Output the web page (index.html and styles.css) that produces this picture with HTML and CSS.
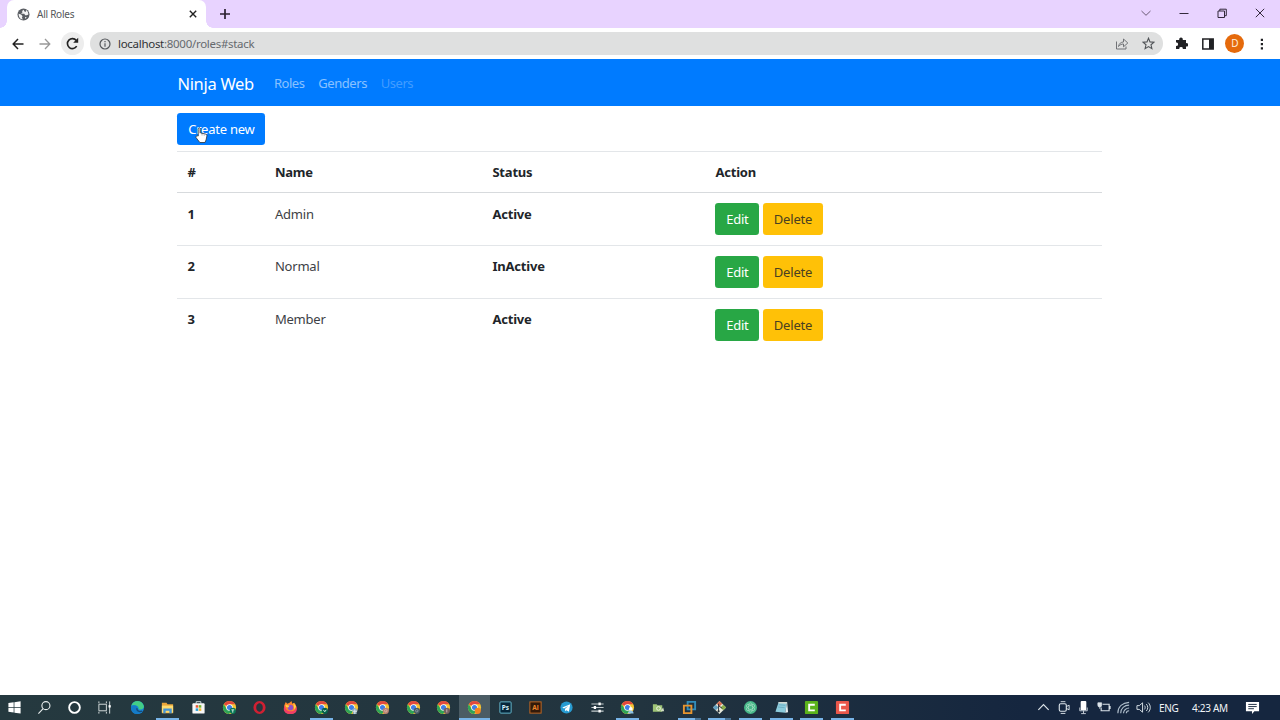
FILE: index.html
```html
<!DOCTYPE html>
<html lang="en">
<head>
  <meta charset="UTF-8">
  <title>All Roles</title>
  <link rel="stylesheet" href="styles.css">
</head>
<body>

<!-- Shared icons -->
<svg class="defs" width="0" height="0">
  <symbol id="chrome" viewBox="0 0 16 16">
    <circle cx="8" cy="8" r="7" fill="#f6c432"/>
    <path d="M8 8L1.9 4.5A7 7 0 0 1 14.1 4.5L8 4.6z" fill="#e2483d"/>
    <path d="M1.9 4.5A7 7 0 0 0 7.6 15L11 9.6 8 8 5 9.6z" fill="#2fa457"/>
    <circle cx="8" cy="8" r="3.5" fill="#fff"/>
    <circle cx="8" cy="8" r="2.7" fill="#3f7fe6"/>
  </symbol>
</svg>

<div class="window">
  <!-- Tab strip -->
  <div class="tabstrip">
    <div class="tab">
      <svg class="favicon" width="13" height="13" viewBox="0 0 16 16"><circle cx="8" cy="8" r="7.4" fill="#5a5e63"/><path d="M2 7l3 1 2 2-1 1 1 3C4 14 2 11 2 7zM8 2l-2 2 1 1-2 2 4 0 1 2 2 0 2-1c0-2-1-5-3-5.500l0 2-1.500 0zM10 11l2 0-2 2.500z" fill="#f4f4f4"/></svg>
      <span class="tab-title">All Roles</span>
      <svg class="tab-close" width="8" height="8" viewBox="0 0 8 8"><path d="M.8.8l6.400 6.400M7.200.8L.8 7.200" stroke="#222" stroke-width="1.400"/></svg>
    </div>
    <svg class="new-tab" width="12" height="12" viewBox="0 0 12 12"><path d="M6 1v10M1 6h10" stroke="#2b2130" stroke-width="1.700"/></svg>
    <div class="window-buttons">
      <span><svg width="10" height="10" viewBox="0 0 10 10"><path d="M.5 3L5 7.300 9.500 3" fill="none" stroke="#6b5c76"/></svg></span>
      <span><svg width="10" height="10" viewBox="0 0 10 10"><path d="M.5 5.500h9" stroke="#33293b"/></svg></span>
      <span><svg width="10" height="10" viewBox="0 0 10 10"><path d="M1 3h6.500v6.500H1zM2.800 3V1.200h6.500v6.500H7.500" fill="none" stroke="#33293b"/></svg></span>
      <span><svg width="10" height="10" viewBox="0 0 10 10"><path d="M.8.8l8.400 8.400M9.200.8L.8 9.200" stroke="#33293b"/></svg></span>
    </div>
  </div>

  <!-- Address bar -->
  <div class="toolbar">
    <span class="tool"><svg width="12" height="12" viewBox="0 0 12 12"><path d="M11.500 6H1.500M6 1L1.200 6 6 11" fill="none" stroke="#222" stroke-width="1.500"/></svg></span>
    <span class="tool"><svg width="12" height="12" viewBox="0 0 12 12"><path d="M.5 6h10M6 1l4.800 5L6 11" fill="none" stroke="#999" stroke-width="1.300"/></svg></span>
    <span class="tool reload"><svg width="13" height="13" viewBox="0 0 13 13"><path d="M10.700 9.200A5 5 0 1 1 10.300 3.400" fill="none" stroke="#222" stroke-width="1.600"/><path d="M12.200.8v5H7.200z" fill="#222"/></svg></span>
    <div class="address">
      <svg width="12" height="12" viewBox="0 0 12 12"><circle cx="6" cy="6" r="5" fill="none" stroke="#55585c" stroke-width="1.200"/><path d="M6 5.300v3.500M6 3v1.300" stroke="#55585c" stroke-width="1.200"/></svg>
      <span class="url">localhost<i>:8000/roles#stack</i></span>
      <svg class="share" width="14" height="13" viewBox="0 0 14 13"><path d="M1.500 4.500v7.500h9.500V9.500M3.500 9.500C4 6.500 6 5 8.500 5V2l4.300 4-4.300 3.800V7C6.500 7 5 7.700 3.500 9.500z" fill="none" stroke="#707276"/></svg>
      <svg width="13" height="13" viewBox="0 0 13 13"><path d="M6.500 1.200l1.500 3.700 4 .3-3 2.600.9 3.900-3.400-2.100-3.400 2.100.9-3.900-3-2.600 4-.3z" fill="none" stroke="#505357" stroke-width="1.100"/></svg>
    </div>
    <div class="extensions">
      <span><svg width="13" height="13" viewBox="0 0 13 13"><path d="M1 3h3.300a1.800 1.800 0 1 1 3.400 0H11v3.200a1.700 1.700 0 1 1 0 3.300V12H7.700a1.700 1.700 0 1 0-3.300 0H1V8.800a1.700 1.700 0 1 0 0-3.300z" fill="#202124"/></svg></span>
      <span><svg width="12" height="12" viewBox="0 0 12 12"><path d="M.8 1h10.400v10H.8z" fill="#fff" stroke="#202124" stroke-width="1.500"/><path d="M7 1h4v10H7z" fill="#202124"/></svg></span>
      <span><b class="avatar">D</b></span>
      <span><svg width="4" height="12" viewBox="0 0 4 12"><path d="M.8.800h2.200v2.200H.8zM.8 5h2.200v2.200H.8zM.8 9.200h2.200v2.200H.8z" fill="#202124"/></svg></span>
    </div>
  </div>

  <nav class="navbar">
    <div class="container">
      <a class="brand">Ninja Web</a>
      <a class="nav-link">Roles</a>
      <a class="nav-link">Genders</a>
      <a class="nav-link disabled">Users</a>
    </div>
  </nav>

  <main class="content container">
    <div class="create">
      <a class="btn btn-primary">Create new</a>
      <svg class="cursor" width="13" height="17" viewBox="0 0 12 17" preserveAspectRatio="none"><path d="M3 9V2.200C3 .6 5.200.6 5.200 2.200V6l4.300 1c1 .2 1.700.8 1.500 2l-.8 4-1 2.500H4.500L1 10.700C.3 9.500 1.800 8.500 3 9z" fill="#fff" stroke="#34373b" stroke-width=".8"/><path d="M3.500 2.200c0-1 1.200-1 1.200 0v4H3.500z" fill="#bcaeb1"/><path d="M6.500 7v1.500M8.500 7.500v1.300" stroke="#999" stroke-width=".7"/></svg>
    </div>
    <table class="table">
      <thead>
        <tr><th class="col-id">#</th><th class="col-name">Name</th><th class="col-status">Status</th><th>Action</th></tr>
      </thead>
      <tbody>
        <tr><th>1</th><td>Admin</td><th>Active</th><td><div class="actions"><a class="btn btn-success">Edit</a><a class="btn btn-warning">Delete</a></div></td></tr>
        <tr><th>2</th><td>Normal</td><th>InActive</th><td><div class="actions"><a class="btn btn-success">Edit</a><a class="btn btn-warning">Delete</a></div></td></tr>
        <tr><th>3</th><td>Member</td><th>Active</th><td><div class="actions"><a class="btn btn-success">Edit</a><a class="btn btn-warning">Delete</a></div></td></tr>
      </tbody>
    </table>
  </main>

  <footer class="taskbar">
    <div class="system">
      <span><svg viewBox="0 0 16 16"><path d="M1.500 3.300l5.600-.8v5H1.500zM7.900 2.400l6.600-1v6.100H7.900zM1.500 8.300h5.600v5l-5.600-.8zM7.900 8.300h6.600v6.200l-6.600-1z" fill="#fff"/></svg></span>
      <span><svg viewBox="0 0 16 16"><circle cx="9.500" cy="6" r="4.300" fill="none" stroke="#e8eded" stroke-width="1.200"/><path d="M6.500 9.200L1.500 14.500" stroke="#e8eded" stroke-width="1.200"/></svg></span>
      <span><svg viewBox="0 0 16 16"><circle cx="8" cy="8" r="5.700" fill="none" stroke="#fff" stroke-width="2"/></svg></span>
      <span><svg viewBox="0 0 16 16"><path d="M2 4.500h8v7H2zM2 1.500v2M10 1.500v2M2 12.500v2M10 12.500v2M13.500 1.500v13" fill="none" stroke="#dce2e2"/><path d="M12.300 5.500h2.400v2.500h-2.400z" fill="#fff"/></svg></span>
    </div>
    <div class="apps">
      <span><svg viewBox="0 0 16 16"><circle cx="8" cy="8" r="7" fill="#1684d8"/><path d="M1.500 6C3 0 12-1 14.700 6c1 4-3.700 5-5.700 3.500 1-3-3-5-7.500-3.500z" fill="#43cd86"/><path d="M1.200 7c3-3 7-1 6 1-2 2 0 5 5 4.300C8 17 0 15 1.200 7z" fill="#147bc8"/><path d="M7.500 8.500c-1 2.500 2 4.500 5.500 3.300" fill="none" stroke="#174c79" stroke-width="1.500"/></svg></span>
      <span class="open"><svg viewBox="0 0 16 16"><path d="M2 3h5l1 1.500h6V14H2z" fill="#eaa63a"/><path d="M2 6h12v7.500H2z" fill="#ffdc70"/><path d="M3.500 9h9v5h-2.500v-2.500H6V14H3.500z" fill="#4594d5"/></svg></span>
      <span><svg viewBox="0 0 16 16"><path d="M5.500 4V1.800h5V4" fill="none" stroke="#d8e4e8"/><rect x="1.500" y="3.500" width="13" height="11" rx="1" fill="#f7f7f7"/><path d="M5 5.500h2.700v2.700H5z" fill="#e95835"/><path d="M8.300 5.500H11v2.700H8.300z" fill="#73b52b"/><path d="M5 8.900h2.700v2.700H5z" fill="#249ed9"/><path d="M8.300 8.900H11v2.700H8.300z" fill="#f4b72d"/></svg></span>
      <span><svg viewBox="0 0 16 16"><use href="#chrome"/><circle cx="11.500" cy="11.500" r="3.300" fill="#087755"/><path d="M10 10.500h3M11.500 10.500v3" stroke="#d7efe5"/></svg></span>
      <span><svg viewBox="0 0 16 16"><ellipse cx="8" cy="8" rx="5" ry="5.500" fill="none" stroke="#cf2032" stroke-width="3"/><ellipse cx="8" cy="8" rx="2.500" ry="4.500" fill="#26363f"/></svg></span>
      <span><svg viewBox="0 0 16 16"><path d="M2 4l1-2 1.500 2L7 3l2-2 1 3 2-1c4 4 3 12-4 12S0 9 2 4z" fill="#ff872a"/><path d="M2 5c0 4 2 7 6 7s6-2 6-6c2 5 0 9-6 9S-1 11 2 5z" fill="#ef3e66"/><circle cx="8" cy="8" r="3" fill="#9251c6"/><path d="M2.500 5L7 6 5.500 8l-2-.5zM11 3l3 4-2 3z" fill="#ffd541"/></svg></span>
      <span class="open"><svg viewBox="0 0 16 16"><use href="#chrome"/><circle cx="11.500" cy="11.500" r="3.300" fill="#05624c"/><path d="M10 10.500l1.500 2 1.500-2" fill="none" stroke="#d7efe5"/></svg></span>
      <span><svg viewBox="0 0 16 16"><use href="#chrome"/><path d="M11.500 8l3 3-1 1v3h-4v-3l-1-1z" fill="#8eabba"/><path d="M11.500 10v5M9 12h5" stroke="#e2e8ed"/></svg></span>
      <span><svg viewBox="0 0 16 16"><use href="#chrome"/><circle cx="11.500" cy="11.500" r="3.300" fill="#b88170"/><circle cx="11.500" cy="11.500" r="1.300" fill="none" stroke="#e1c7bb" stroke-width=".7"/></svg></span>
      <span><svg viewBox="0 0 16 16"><use href="#chrome"/><circle cx="11.500" cy="11.500" r="3.300" fill="#465963"/><circle cx="11.500" cy="11.500" r="1.300" fill="none" stroke="#a3b2b8" stroke-width=".7"/></svg></span>
      <span><svg viewBox="0 0 16 16"><use href="#chrome"/><circle cx="11.500" cy="11.500" r="3.300" fill="#745f60"/><path d="M11.500 9.800v3.400" stroke="#c5b8b8"/></svg></span>
      <span class="open current"><svg viewBox="0 0 16 16"><use href="#chrome"/><circle cx="11.500" cy="11.500" r="3.300" fill="#f48421"/></svg></span>
      <span><svg viewBox="0 0 16 16"><rect x="2" y="2" width="12" height="12" rx="1" fill="#07263a" stroke="#69bdd2"/><text x="4" y="10.800" class="app-letter" fill="#d8f1fc">Ps</text></svg></span>
      <span><svg viewBox="0 0 16 16"><rect x="2" y="2" width="12" height="12" fill="#321a0a" stroke="#c56b24"/><text x="4.500" y="10.800" class="app-letter" fill="#ef8529">Ai</text></svg></span>
      <span><svg viewBox="0 0 16 16"><circle cx="8" cy="8" r="6.500" fill="#279bd1"/><path d="M3.500 8l8.500-3.500-1.500 8-2.500-1.700-1.300 1.200-.4-2.500 3.500-3-4.500 2.500z" fill="#fff"/></svg></span>
      <span><svg viewBox="0 0 16 16"><path d="M1.500 4.200h13M1.500 8h13M1.500 11.800h13" stroke="#c3cbce" stroke-width="1.200"/><path d="M9 2.700h2.500v3H9zM4 6.500h2.500v3H4zM9 10.300h2.500v3H9z" fill="#fff"/></svg></span>
      <span class="open"><svg viewBox="0 0 16 16"><use href="#chrome"/><circle cx="11.500" cy="9.500" r="2" fill="#fff"/><path d="M8.500 14.500c0-4.500 6-4.500 6 0z" fill="#8cc4e6"/></svg></span>
      <span><svg viewBox="0 0 16 16"><path d="M2 4.500h4l1 1h5v7H2z" fill="#9ec477"/><circle cx="8" cy="9" r="2" fill="none" stroke="#f0f5e8"/><path d="M10 12l4 0-1-4z" fill="#d2dec5"/></svg></span>
      <span class="open stacked"><svg viewBox="0 0 16 16"><path d="M6 2h8v8H6z" fill="none" stroke="#318dbb" stroke-width="2"/><path d="M2 6h8v8H2z" fill="none" stroke="#e8952f" stroke-width="2"/></svg></span>
      <span class="open stacked"><svg viewBox="0 0 16 16"><path d="M8 1l7 7-7 7-7-7z" fill="#e9eadb"/><path d="M8 1l3 3-3 3-3-3z" fill="#d96d50"/><path d="M12 5l3 3-3 3-3-3z" fill="#88ad48"/><path d="M4 5l3 3-3 3-3-3z" fill="#629fbf"/><path d="M7 4v8M7 6l4 3" stroke="#252d38"/><circle cx="7" cy="12" r="1.200" fill="#252d38"/></svg></span>
      <span class="open"><svg viewBox="0 0 16 16"><circle cx="8" cy="8" r="6.900" fill="#47b889"/><g fill="none" stroke="#afe1c8" stroke-width=".6"><ellipse cx="8" cy="8" rx="2.200" ry="5"/><ellipse cx="8" cy="8" rx="2.200" ry="5" transform="rotate(60 8 8)"/><ellipse cx="8" cy="8" rx="2.200" ry="5" transform="rotate(120 8 8)"/></g></svg></span>
      <span class="open"><svg viewBox="0 0 16 16"><path d="M5 2h9l-2 11.500-10.500-1z" fill="#8bcbdc"/><path d="M5 2h9l-.5 2-9-.5z" fill="#d3d8d2"/><path d="M12 13.500l2-11.500 1 11z" fill="#e6eef0"/><path d="M5 5l7 .7M4.300 7.500l7 .7" stroke="#5c9bb0" stroke-width=".6"/></svg></span>
      <span class="open"><svg viewBox="0 0 16 16"><rect x="1" y="1" width="14" height="14" rx="1" fill="#5bb31c"/><path d="M11.500 5H5.500v6h6" fill="none" stroke="#fff" stroke-width="2"/></svg></span>
      <span class="open"><svg viewBox="0 0 16 16"><rect x="1" y="1" width="14" height="14" rx="1" fill="#e9574b"/><path d="M11.500 5H5.500v6h6" fill="none" stroke="#fff" stroke-width="2"/></svg></span>
    </div>
    <div class="tray">
      <svg viewBox="0 0 16 16"><path d="M2.500 10.500L8 5l5.500 5.500" fill="none" stroke="#dce4ea" stroke-width="1.300"/></svg>
      <svg viewBox="0 0 16 16"><rect x="3.500" y="4" width="7.500" height="8" rx="1.500" fill="none" stroke="#dce4ea" stroke-width="1.200"/><path d="M11 7l3-1.500v5L11 9M5 1.800h5M5 14.300h5" fill="none" stroke="#dce4ea"/></svg>
      <svg viewBox="0 0 16 16"><rect x="5" y="1" width="6" height="10" rx="1" fill="#fff"/><path d="M4 8v3.500h8V8M8 11v3.500M5.500 14.500h5" fill="none" stroke="#c6cfd8"/></svg>
      <svg viewBox="0 0 16 16"><path d="M7 4.500h7v7H5.500V8M15 6.500v3" fill="none" stroke="#dce4ea" stroke-width="1.200"/><path d="M2 3h4v2.500a2 2 0 0 1-4 0zM4 7.500v2" fill="#dce4ea" stroke="#dce4ea" stroke-width=".8"/></svg>
      <svg viewBox="0 0 16 16"><path d="M2 14C2 7 7 3 14 2.500M5 14c0-5 4-8.500 9-8.500M8 14c0-3 3-5.500 6-5.500M11 14c0-1.500 1-2.500 3-2.500" fill="none" stroke="#aebdca" stroke-width="1.200"/></svg>
      <svg viewBox="0 0 16 16"><path d="M1 6h2.500L7 3v10l-3.500-3H1zM9 6c1 1 1 3 0 4M11 4.300c2 2 2 5.400 0 7.400M13 2.800c3 3 3 7.400 0 10.400" fill="none" stroke="#dce4ea"/></svg>
      <span class="lang">ENG</span>
      <span class="clock">4:23 AM</span>
      <svg class="notice" viewBox="0 0 16 16"><path d="M1 2h14v10H10l-2.500 3V12H1z" fill="#fff"/><path d="M3.500 4.700h9M3.500 7h9M3.500 9.300h6" stroke="#17273e"/></svg>
    </div>
  </footer>
</div>

</body>
</html>
```

FILE: styles.css
```css
* {
  box-sizing: border-box;
}
body {
  margin: 0;
  font-family: "Noto Sans", "Open Sans", sans-serif;
  font-size: 13px;
  color: #212529;
  background: #fff;
}
svg {
  display: block;
  flex: none;
}
.defs {
  position: absolute;
}
.window {
  height: 720px;
  display: flex;
  flex-direction: column;
  overflow: hidden;
}

/* browser */
.tabstrip {
  height: 28px;
  flex: none;
  display: flex;
  align-items: center;
  padding-left: 7px;
  background: #e8d3ff;
}
.tab {
  position: relative;
  width: 199px;
  height: 28px;
  display: flex;
  align-items: center;
  padding: 0 9px 0 10px;
  border-radius: 7px 7px 0 0;
  background: #fff;
}
.tab::before,
.tab::after {
  content: "";
  position: absolute;
  bottom: 0;
  width: 7px;
  height: 7px;
}
.tab::before {
  left: -7px;
  background: radial-gradient(circle at 0 0, transparent 6.5px, #fff 7px);
}
.tab::after {
  right: -7px;
  background: radial-gradient(circle at 100% 0, transparent 6.5px, #fff 7px);
}
.tab-title {
  flex: 1;
  margin-left: 7px;
  font-size: 10px;
  letter-spacing: -0.25px;
  color: #55575b;
}
.new-tab {
  margin-left: 13px;
}
.window-buttons {
  display: flex;
  margin-left: auto;
  padding: 0 1px 3px 0;
}
.window-buttons span {
  width: 38px;
  display: flex;
  justify-content: center;
}
.toolbar {
  height: 31px;
  flex: none;
  display: flex;
  align-items: center;
  padding-left: 4px;
  background: #fff;
}
.tool {
  width: 27px;
  height: 23px;
  display: flex;
  align-items: center;
  justify-content: center;
}
.reload {
  width: 23px;
  margin-left: 3px;
  border-radius: 50%;
  background: #ededed;
}
.address {
  width: 1073px;
  height: 23px;
  display: flex;
  align-items: center;
  margin-left: 6px;
  padding: 0 8px 0 9px;
  border-radius: 12px;
  background: #dfe0e0;
}
.url {
  flex: 1;
  margin-left: 7px;
  font-size: 11.5px;
  letter-spacing: -0.29px;
  color: #303236;
}
.url i {
  font-style: normal;
  color: #66696e;
}
.share {
  margin-right: 13px;
}
.extensions {
  display: flex;
  align-items: center;
  margin-left: 5.2px;
}
.extensions span {
  width: 26.7px;
  display: flex;
  justify-content: center;
}
.avatar {
  width: 19px;
  border-radius: 50%;
  background: #e56a0c;
  color: #fff0df;
  font-size: 10px;
  font-weight: normal;
  line-height: 19px;
  text-align: center;
}

/* page */
.container {
  width: 925px;
  margin: 0 auto 0 177.4px;
}
.navbar {
  height: 47px;
  flex: none;
  display: flex;
  background: #007bff;
}
.navbar .container {
  display: flex;
  align-items: center;
  padding-top: 1px;
}
.brand {
  width: 96.5px;
  font-size: 16.5px;
  letter-spacing: -0.3px;
  color: #fff;
}
.nav-link {
  margin-right: 13.8px;
  letter-spacing: -0.45px;
  color: rgba(255, 255, 255, 0.55);
}
.nav-link.disabled {
  color: rgba(255, 255, 255, 0.27);
}
.content {
  flex: 1;
  padding-top: 7px;
}
.create {
  position: relative;
  display: flex;
  margin-bottom: 6px;
}
.cursor {
  position: absolute;
  left: 17.6px;
  top: 14px;
}
.btn {
  height: 32px;
  padding-top: 1px;
  line-height: 31px;
  text-align: center;
  border-radius: 3.3px;
}
.btn-primary {
  width: 88px;
  letter-spacing: -0.25px;
  background: #007bff;
  color: #fff;
}
.btn-success {
  width: 44px;
  background: #28a745;
  color: #fff;
}
.btn-warning {
  width: 60px;
  letter-spacing: -0.15px;
  background: #ffc107;
  color: #494021;
}
.table {
  width: 100%;
  table-layout: fixed;
  border-spacing: 0;
}
.table th,
.table td {
  height: 52.6px;
  padding: 10px;
  border-top: 1px solid #e3e6e9;
  line-height: 20px;
  letter-spacing: -0.2px;
  text-align: left;
  vertical-align: top;
}
.table td {
  color: #3d4145;
}
.table thead th {
  height: 41px;
}
.table tbody tr:first-child > * {
  border-top-color: #d7dadd;
  line-height: 22px;
}
.table .col-id {
  width: 87.5px;
}
.table .col-name {
  width: 217.5px;
}
.table .col-status {
  width: 223px;
}
.actions {
  display: flex;
  gap: 3.6px;
}

/* taskbar */
.taskbar {
  height: 25px;
  flex: none;
  display: flex;
  background: linear-gradient(90deg, #25393f, #22343f 50%, #15263f 80%, #15263f);
}
.system,
.apps {
  display: flex;
}
.system span,
.apps span {
  width: 30px;
  height: 25px;
  display: flex;
  align-items: center;
  justify-content: center;
}
.system {
  margin: 0 3px 0 -1px;
}
.taskbar svg {
  width: 15px;
  height: 15px;
}
.apps span {
  width: 30.67px;
}
.apps .open {
  background: linear-gradient(#78b4e8, #78b4e8) center bottom / 23px 2px no-repeat;
}
.apps .stacked {
  background: linear-gradient(90deg, #78b4e8 75%, #477193 75%) center bottom / 23px 2px no-repeat;
}
.apps .current {
  background: linear-gradient(#4b5c64 23px, #78b4e8 23px);
}
.app-letter {
  font-size: 7px;
  font-weight: bold;
}
.tray {
  display: flex;
  align-items: center;
  gap: 5px;
  margin-left: auto;
  width: 244px;
  color: #f1f5f8;
  font-size: 10px;
}
.lang,
.clock {
  letter-spacing: -0.3px;
  white-space: nowrap;
}
.lang {
  width: 22px;
  margin-left: 3px;
}
.clock {
  width: 40px;
  margin-left: 6px;
}
.tray .notice {
  margin-left: 8px;
}
```
